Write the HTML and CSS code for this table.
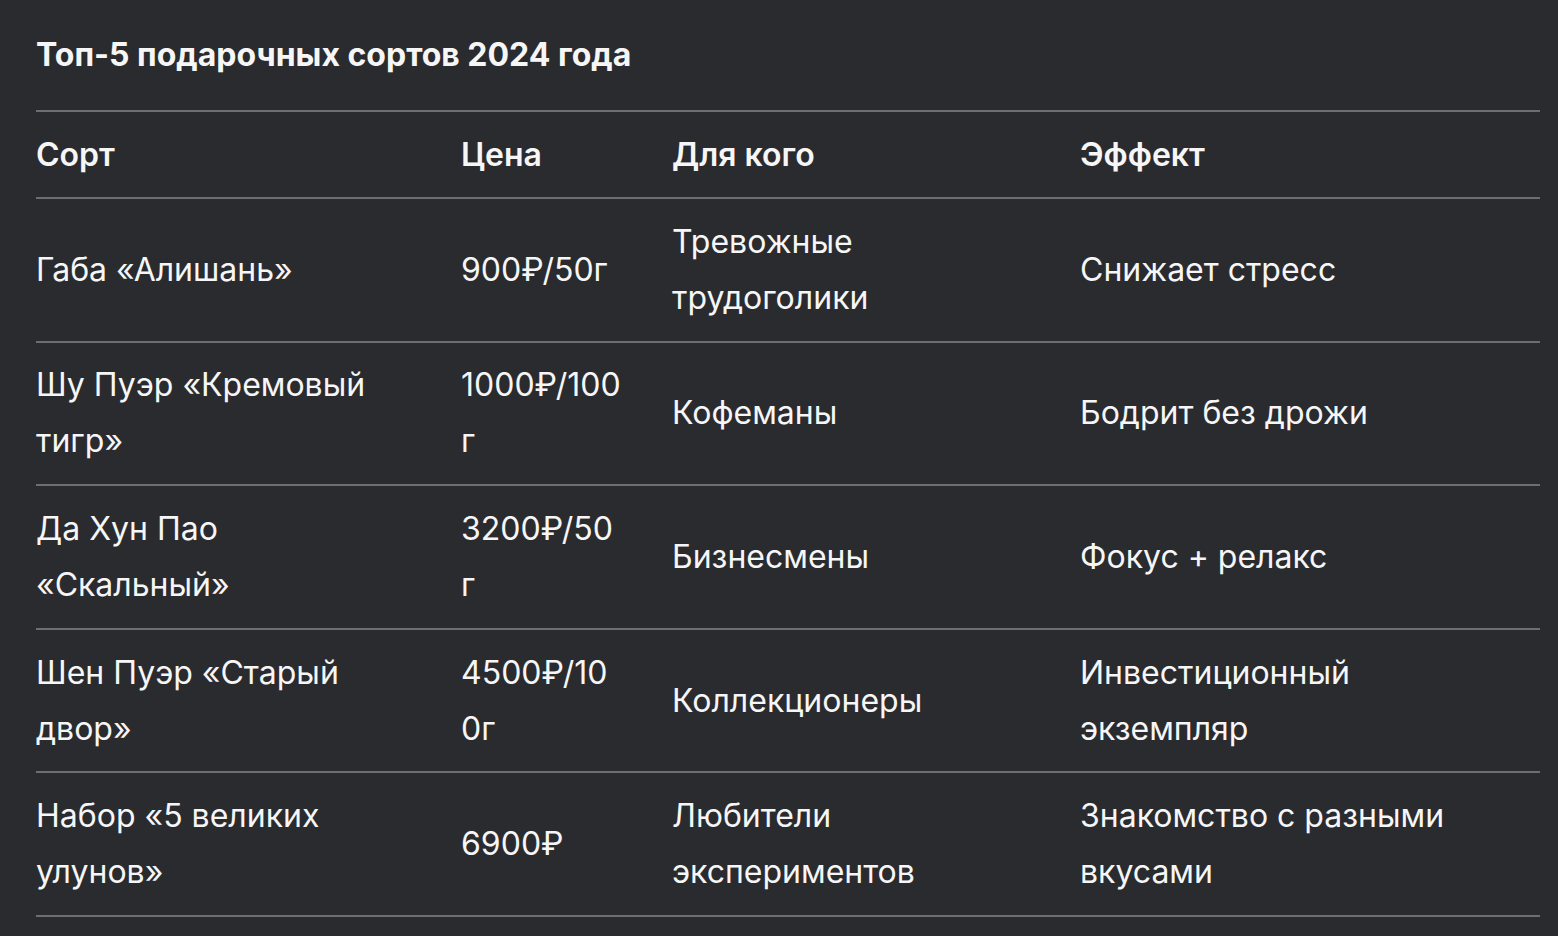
FILE: index.html
```html
<!DOCTYPE html>
<html lang="ru">
<head>
<meta charset="utf-8">
<title>Топ-5 подарочных сортов 2024 года</title>
<link rel="stylesheet" href="styles.css">
</head>
<body>
<main class="page">
  <h2 class="title">Топ-5 подарочных сортов 2024 года</h2>
  <table class="grid">
    <colgroup>
      <col class="c1"><col class="c2"><col class="c3"><col class="c4">
    </colgroup>
    <thead>
      <tr><th>Сорт</th><th>Цена</th><th>Для кого</th><th>Эффект</th></tr>
    </thead>
    <tbody>
      <tr><td>Габа «Алишань»</td><td class="price">900₽/50г</td><td>Тревожные трудоголики</td><td>Снижает стресс</td></tr>
      <tr><td>Шу Пуэр «Кремовый тигр»</td><td class="price">1000₽/100г</td><td>Кофеманы</td><td>Бодрит без дрожи</td></tr>
      <tr><td>Да Хун Пао «Скальный»</td><td class="price">3200₽/50г</td><td>Бизнесмены</td><td>Фокус + релакс</td></tr>
      <tr><td>Шен Пуэр «Старый двор»</td><td class="price">4500₽/100г</td><td>Коллекционеры</td><td>Инвестиционный экземпляр</td></tr>
      <tr><td>Набор «5 великих улунов»</td><td class="price">6900₽</td><td>Любители экспериментов</td><td>Знакомство с разными вкусами</td></tr>
    </tbody>
  </table>
</main>
</body>
</html>
```

FILE: styles.css
```css
html, body {
  margin: 0;
  padding: 0;
  background: #2a2b2f;
}
body {
  color: #f6f6f7;
  font-family: Inter, "Noto Sans", sans-serif;
  font-size: 32px;
  line-height: 56px;
}
.page {
  padding: 27px 18px 0 36px;
}
.title {
  margin: 0 0 27px;
  font-size: 32px;
  line-height: 56px;
  font-weight: 700;
}
.grid {
  width: 1504px;
  border-collapse: collapse;
  table-layout: fixed;
  border-top: 2px solid #6e6e6e;
}
.c1 { width: 425px; }
.c2 { width: 211px; }
.c3 { width: 408px; }
.c4 { width: 460px; }
.grid th,
.grid td {
  text-align: left;
  vertical-align: middle;
  padding: 14.8px 0;
  border-bottom: 2px solid #6e6e6e;
}
.grid th {
  font-weight: 600;
  padding: 14.5px 0;
}
.grid td:nth-child(1) { padding-right: 80px; }
.grid td:nth-child(2) { padding-right: 49px; overflow-wrap: anywhere; }
.grid td:nth-child(3) { padding-right: 110px; }
.grid td:nth-child(4) { padding-right: 50px; }
```
